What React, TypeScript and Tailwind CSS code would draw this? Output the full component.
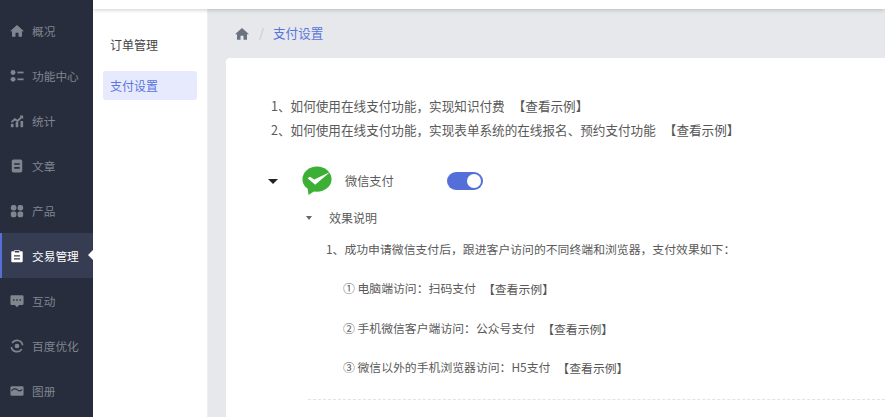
import { ReactNode } from 'react';

function Icon({ children }: { children: ReactNode }) {
  return (
    <svg viewBox="0 0 16 16" className="w-[14px] h-[14px] shrink-0" fill="currentColor">
      {children}
    </svg>
  );
}

const HomeGlyph = () => <path d="M8 1 16 8.200h-2.300v6.300H9.700V10H6.300v4.500H2.300V8.200H0z" />;

const menu: { label: string; icon: ReactNode; active?: boolean }[] = [
  { label: '概况', icon: <HomeGlyph /> },
  {
    label: '功能中心',
    icon: (
      <>
        <circle cx="3.500" cy="4" r="2.800" />
        <circle cx="3.500" cy="11.800" r="2.800" />
        <rect x="8.500" y="3" width="7" height="2" />
        <rect x="8.500" y="10.800" width="7" height="2" />
      </>
    ),
  },
  {
    label: '统计',
    icon: (
      <>
        <rect x="1" y="11" width="3" height="4" rx="0.500" />
        <rect x="6.500" y="9" width="3" height="6" rx="0.500" />
        <rect x="12" y="8" width="3" height="7" rx="0.500" />
        <path d="M1 8.500 5.500 4.500l3 2L12 3l-1.200-1.200H15V6l-1.300-1.300-5 4.600-3-2L2 10z" />
      </>
    ),
  },
  {
    label: '文章',
    icon: (
      <path
        fillRule="evenodd"
        d="M4 .5h8a2 2 0 0 1 2 2v11a2 2 0 0 1-2 2H4a2 2 0 0 1-2-2v-11a2 2 0 0 1 2-2zm.8 4.300v1.900h6.400V4.800zm0 4.400v1.900h6.400V9.200z"
      />
    ),
  },
  {
    label: '产品',
    icon: (
      <>
        <rect x="1" y="1" width="6.300" height="6.300" rx="2.500" />
        <rect x="8.700" y="1" width="6.300" height="6.300" rx="2.500" />
        <rect x="1" y="8.700" width="6.300" height="6.300" rx="2" />
        <rect x="8.700" y="8.700" width="6.300" height="6.300" rx="2" />
      </>
    ),
  },
  {
    label: '交易管理',
    active: true,
    icon: (
      <path
        fillRule="evenodd"
        d="M5 1h6v1.500h2.500a1 1 0 0 1 1 1V14a1 1 0 0 1-1 1h-11a1 1 0 0 1-1-1V3.500a1 1 0 0 1 1-1H5zm.5 1v2h5V2zM4.500 7v1.500h7V7zm0 3.500V12h7v-1.500z"
      />
    ),
  },
  {
    label: '互动',
    icon: (
      <path
        fillRule="evenodd"
        d="M2 1.500h12a1.500 1.500 0 0 1 1.500 1.500v8A1.500 1.500 0 0 1 14 12.500h-3.500L8 15l-2.500-2.500H2A1.500 1.500 0 0 1 .5 11V3A1.500 1.500 0 0 1 2 1.500zM3.500 6v1.600h1.600V6zm3.700 0v1.600h1.600V6zm3.700 0v1.600h1.600V6z"
      />
    ),
  },
  {
    label: '百度优化',
    icon: (
      <>
        <circle cx="8" cy="8" r="2.700" />
        <path d="M8 .5a7.500 7.500 0 0 1 7.400 6.500h-2A5.500 5.500 0 0 0 3.400 5L1.700 3.900A7.500 7.500 0 0 1 8 .5z" />
        <path d="M.6 9h2a5.500 5.500 0 0 0 10 2l1.700 1.100A7.500 7.500 0 0 1 .6 9z" />
      </>
    ),
  },
  {
    label: '图册',
    icon: (
      <path
        fillRule="evenodd"
        d="M2 2.500h12a1.500 1.500 0 0 1 1.500 1.500v8a1.500 1.500 0 0 1-1.500 1.500H2A1.500 1.500 0 0 1 .5 12V4A1.500 1.500 0 0 1 2 2.500zM1.500 8.500c3-3 5-2.500 7-1s3.500 1.200 5.500-.5v-1.200c-2 1.500-3.500 1.700-5.500.2s-4.500-1.500-7 1z"
      />
    ),
  },
];

function DemoLink({ className = '' }: { className?: string }) {
  return <span className={`text-[#555] ${className}`}>【查看示例】</span>;
}

export default function App() {
  return (
    <div
      className="w-[885px] h-[417px] overflow-hidden flex bg-[#e6e8ec] text-[12.6px] text-[#5a5a5a]"
      style={{ fontFamily: '"Noto Sans CJK SC", "Noto Sans", sans-serif' }}
    >
      {/* main menu */}
      <aside className="w-[93px] shrink-0 bg-[#272d3c] pt-2">
        {menu.map((item) => (
          <div
            key={item.label}
            className={`relative h-[45px] flex items-center gap-2 text-[11.7px] ${
              item.active
                ? 'bg-[#363d52] text-white border-l-2 border-[#5470d8] pl-2'
                : 'text-[#80858f] pl-[10px]'
            }`}
          >
            <Icon>{item.icon}</Icon>
            <span className="whitespace-nowrap">{item.label}</span>
            {item.active && (
              <span className="absolute right-0 top-[17px] w-0 h-0 border-y-[5.500px] border-y-transparent border-r-[5.500px] border-r-white" />
            )}
          </div>
        ))}
      </aside>

      <div className="flex-1 min-w-0 flex flex-col">
        <div className="relative z-10 h-[9px] shrink-0 bg-white shadow-[0_1px_4px_rgba(0,0,0,0.2)]" />

        <div className="flex-1 min-h-0 flex">
          {/* sub menu */}
          <nav className="w-[115px] shrink-0 bg-white border-r border-[#eceef2] px-[10px] pt-[21px] text-[12px]">
            <div className="h-[29px] leading-[29px] px-[7px] text-[#444]">订单管理</div>
            <div className="mt-[12px] h-[29px] leading-[29px] px-[7px] rounded-[3px] bg-[#e6eafc] text-[#5a75dd]">
              支付设置
            </div>
          </nav>

          <main className="flex-1 min-w-0 pl-[18px]">
            <div className="h-[49px] flex items-center">
              <span className="text-[#6b7280]">
                <svg viewBox="0 0 16 16" className="w-[14px] h-[14px] ml-[9px]" fill="currentColor">
                  <HomeGlyph />
                </svg>
              </span>
              <span className="ml-[10px] text-[#c5cad1]">/</span>
              <span className="ml-[9px] text-[#5a75dd]">支付设置</span>
            </div>

            <section className="bg-white rounded-l-[4px] h-[400px] pt-[36px] pl-[45px]">
              <p className="h-[24px] leading-[24px] whitespace-nowrap">
                1、如何使用在线支付功能，实现知识付费<DemoLink className="ml-[8px]" />
              </p>
              <p className="h-[24px] leading-[24px] whitespace-nowrap">
                2、如何使用在线支付功能，实现表单系统的在线报名、预约支付功能<DemoLink className="ml-[8px]" />
              </p>

              <div className="mt-[23px] flex items-center h-[32px]">
                <span className="w-0 h-0 border-x-[5px] border-x-transparent border-t-[5px] border-t-[#222] -ml-[3px]" />
                <svg viewBox="0 0 32 32" className="ml-[23px] w-[32px] h-[30px]">
                  <ellipse cx="16" cy="14" rx="15.500" ry="13.500" fill="#3cb034" />
                  <path d="M6 24l1 7 6-4z" fill="#3cb034" />
                  <path d="M6 13l2.500-1.500L13 14.500 30 6.500 14 20z" fill="#fff" />
                </svg>
                <span className="ml-[12px] text-[12.200px]">微信支付</span>
                <span className="ml-[53px] w-[36px] h-[18px] rounded-full bg-[#5470d8] relative">
                  <span className="absolute right-[2px] top-[2px] w-[14px] h-[14px] rounded-full bg-white" />
                </span>
              </div>

              <div className="mt-[11px] ml-[35px] flex items-center h-[20px] text-[12px]">
                <span className="w-0 h-0 border-x-[3.500px] border-x-transparent border-t-[4px] border-t-[#666]" />
                <span className="ml-[17px]">效果说明</span>
              </div>

              <div className="mt-[11px] ml-[55px] text-[11.850px] leading-[20px] whitespace-nowrap">
                1、成功申请微信支付后，跟进客户访问的不同终端和浏览器，支付效果如下：
              </div>

              <div className="ml-[72px] mt-[19px] flex flex-col gap-[19.500px] text-[11.850px] leading-[20px] whitespace-nowrap">
                <div>
                  ① 电脑端访问：扫码支付<DemoLink className="ml-[7px] relative top-px" />
                </div>
                <div>
                  ② 手机微信客户端访问：公众号支付<DemoLink className="ml-[7px] relative top-px" />
                </div>
                <div>
                  ③ 微信以外的手机浏览器访问：H5支付<DemoLink className="ml-[7px] relative top-px" />
                </div>
              </div>

              <div className="mt-[22px] ml-[37px] border-t border-dashed border-[#e3e3e3]" />
            </section>
          </main>
        </div>
      </div>
    </div>
  );
}
